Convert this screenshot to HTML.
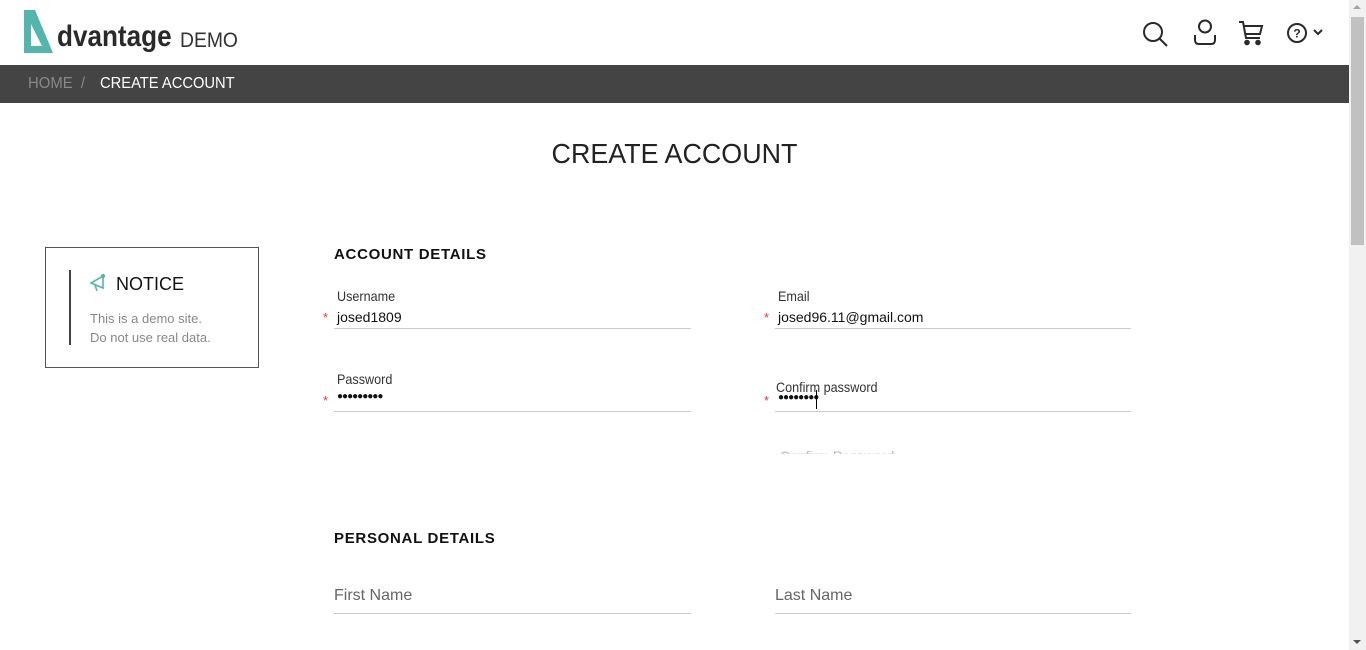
<!DOCTYPE html>
<html><head><meta charset="utf-8"><style>
*{margin:0;padding:0;box-sizing:border-box}
body{width:1366px;height:650px;overflow:hidden;background:#fff;font-family:"Liberation Sans",sans-serif;position:relative}
.a{position:absolute;white-space:nowrap}
.lbl{font-size:14px;color:#333;transform:scaleX(0.9);transform-origin:left}
.val{font-size:14px;color:#111}
.star{color:#e33;font-size:13px}
.line{position:absolute;height:1px;background:#ccc}
</style></head><body>
<!-- header -->
<svg class="a" style="left:22px;top:10px" width="36" height="44" viewBox="0 0 36 44"><path d="M2 0 H13 L31 43 H2 Z M9 14 V36 H20 Z" fill="#54b5ad" fill-rule="evenodd"/></svg>
<div class="a" style="left:57px;top:20px;font-size:30px;font-weight:bold;color:#2a2a2a;transform:scaleX(0.87);transform-origin:left">dvantage</div>
<div class="a" style="left:180px;top:29px;font-size:21px;color:#333;transform:scaleX(0.92);transform-origin:left">DEMO</div>
<svg class="a" style="left:1141px;top:20px" width="28" height="28" viewBox="0 0 28 28" fill="none" stroke="#2a2a2a" stroke-width="2"><circle cx="12" cy="12" r="9"/><path d="M18.5 18.5 L26 26"/></svg>
<svg class="a" style="left:1193px;top:19px" width="24" height="27" viewBox="0 0 24 27" fill="none" stroke="#2a2a2a" stroke-width="2"><circle cx="12" cy="7.5" r="6"/><path d="M2 16 V21 Q2 25 6 25 H18 Q22 25 22 21 V16"/></svg>
<svg class="a" style="left:1238px;top:20px" width="26" height="26" viewBox="0 0 26 26" fill="none" stroke="#2a2a2a" stroke-width="2"><path d="M1 2 H5 L8 18 H22 M6 6 H24 L22 14 H7.5"/><circle cx="9" cy="22.5" r="1.8" fill="#2a2a2a"/><circle cx="20" cy="22.5" r="1.8" fill="#2a2a2a"/></svg>
<svg class="a" style="left:1286px;top:22px" width="42" height="22" viewBox="0 0 42 22" fill="none" stroke="#2a2a2a" stroke-width="2"><circle cx="11" cy="11" r="9"/><text x="11" y="15.5" font-size="12" font-weight="bold" fill="#2a2a2a" stroke="none" text-anchor="middle" font-family="Liberation Sans">?</text><path d="M28 8 L32 12 L36 8"/></svg>
<!-- breadcrumb -->
<div class="a" style="left:0;top:65px;width:1349px;height:38px;background:#444"></div>
<div class="a" style="left:28px;top:75px;font-size:16px;color:#888;transform:scaleX(0.93);transform-origin:left">HOME&nbsp; /</div>
<div class="a" style="left:100px;top:75px;font-size:16px;color:#fff;transform:scaleX(0.92);transform-origin:left">CREATE ACCOUNT</div>
<!-- title -->
<div class="a" style="left:0;width:1349px;text-align:center;top:138px;font-size:28px;color:#222;transform:scaleX(0.96)">CREATE ACCOUNT</div>
<!-- notice -->
<div class="a" style="left:45px;top:247px;width:214px;height:121px;border:1px solid #555"></div>
<div class="a" style="left:69px;top:270px;width:2px;height:75px;background:#444"></div>
<svg class="a" style="left:89px;top:274px" width="18" height="20" viewBox="0 0 18 20" fill="none" stroke="#54b5ad" stroke-width="1.6"><path d="M14 2 L14 14 L2 9 Z M6 11 L8 17"/><circle cx="14" cy="2" r="1.3"/></svg>
<div class="a" style="left:116px;top:274px;font-size:18px;color:#111">NOTICE</div>
<div class="a" style="left:90px;top:309px;font-size:13px;color:#888;line-height:19px">This is a demo site.<br>Do not use real data.</div>
<!-- account details -->
<div class="a" style="left:334px;top:246px;font-size:15px;font-weight:bold;color:#111;letter-spacing:0.7px">ACCOUNT DETAILS</div>
<div class="a lbl" style="left:337px;top:288px">Username</div>
<div class="a star" style="left:323px;top:310px">*</div>
<div class="a val" style="left:337px;top:309px">josed1809</div>
<div class="line" style="left:334px;top:328px;width:357px"></div>
<div class="a lbl" style="left:778px;top:288px">Email</div>
<div class="a star" style="left:764px;top:310px">*</div>
<div class="a val" style="left:778px;top:309px">josed96.11@gmail.com</div>
<div class="line" style="left:775px;top:328px;width:356px"></div>
<div class="a lbl" style="left:337px;top:371px">Password</div>
<div class="a star" style="left:323px;top:393px">*</div>
<div class="a val" style="left:337px;top:391px;font-size:10px;letter-spacing:-1px">●●●●●●●●●</div>
<div class="line" style="left:334px;top:411px;width:357px"></div>
<div class="a lbl" style="left:776px;top:379px">Confirm password</div>
<div class="a star" style="left:764px;top:393px">*</div>
<div class="a val" style="left:778px;top:392px;font-size:10px;letter-spacing:-1px">●●●●●●●●</div>
<div class="a" style="left:816px;top:390px;width:1px;height:19px;background:#000"></div>
<div class="line" style="left:775px;top:411px;width:356px"></div>
<div class="a" style="left:780px;top:448px;height:6px;overflow:hidden;font-size:14px;color:#bbb">Confirm Password</div>
<!-- personal -->
<div class="a" style="left:334px;top:530px;font-size:15px;font-weight:bold;color:#111;letter-spacing:0.7px">PERSONAL DETAILS</div>
<div class="a" style="left:334px;top:587px;font-size:16px;color:#666">First Name</div>
<div class="line" style="left:334px;top:613px;width:357px"></div>
<div class="a" style="left:775px;top:587px;font-size:16px;color:#666">Last Name</div>
<div class="line" style="left:775px;top:613px;width:356px"></div>
<!-- scrollbar -->
<div class="a" style="left:1349px;top:0;width:17px;height:650px;background:#f1f1f1"></div>
<div class="a" style="left:1351px;top:17px;width:13px;height:228px;background:#c1c1c1"></div>
<div class="a" style="left:1353px;top:5px;width:0;height:0;border:4px solid transparent;border-bottom-color:#a3a3a3;border-top:0"></div>
<div class="a" style="left:1353px;top:640px;width:0;height:0;border:4px solid transparent;border-top-color:#505050;border-bottom:0"></div>
</body></html>
